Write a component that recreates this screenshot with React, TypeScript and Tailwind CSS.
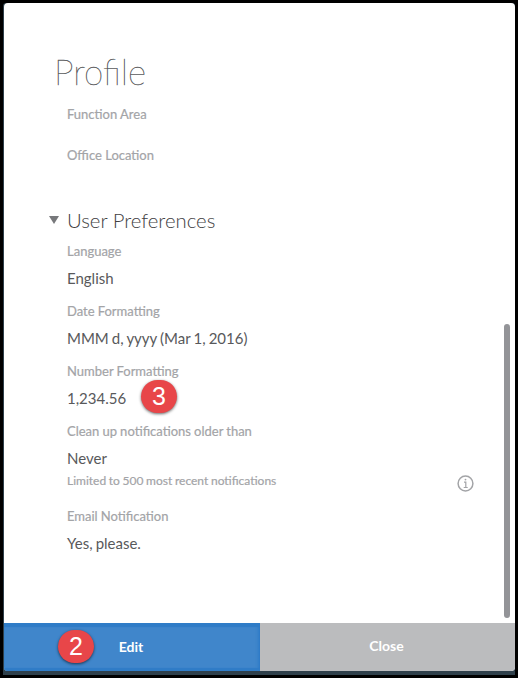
import React from "react";
import { clsx } from "clsx";

const preferences = [
  { label: "Language", value: "English" },
  { label: "Date Formatting", value: "MMM d, yyyy (Mar 1, 2016)" },
  { label: "Number Formatting", value: "1,234.56", step: "3" },
  {
    label: "Clean up notifications older than",
    value: "Never",
    hint: "Limited to 500 most recent notifications",
  },
  { label: "Email Notification", value: "Yes, please." },
];

function StepBadge({ step, className }: { step: string; className?: string }) {
  return (
    <span
      className={clsx(
        "absolute flex h-[33px] w-9 items-center justify-center rounded-full bg-[#e84649] font-['Liberation_Sans',sans-serif] text-[25px] leading-none font-normal text-white shadow-[0_1px_3px_rgba(0,0,0,0.6)]",
        className
      )}
    >
      {step}
    </span>
  );
}

function InfoIcon() {
  return (
    <svg className="mt-[4px] h-[17px] w-[17px]" viewBox="0 0 17 17" fill="none" stroke="#a3a4a7">
      <circle cx="8.5" cy="8.5" r="7.4" strokeWidth="1.5" />
      <path d="M7 7.2h1.8v5.3M6.7 12.5h4" strokeWidth="1.2" />
      <circle cx="8.5" cy="4.6" r="0.9" fill="#a3a4a7" stroke="none" />
    </svg>
  );
}

export default function App() {
  return (
    <div className="h-[678px] w-[518px] overflow-hidden bg-black pt-[3px] pl-[3px] font-['Lato',sans-serif]">
      <div className="h-[672px] w-[512px] rounded-t-[3px] bg-[#2f404b] pl-px">
        <div className="relative flex h-[668px] flex-col overflow-hidden rounded-[4px] bg-white">
          <div className="flex-1 pl-[63px]">
            <h1 className="-ml-[13px] pt-[47px] text-[35px] leading-[42px] font-extralight text-[#58595b] [-webkit-text-stroke:0.35px_#58595b]">
              Profile
            </h1>
            <div className="pt-[12px] text-[13px] leading-5 text-[#a3a4a7] [-webkit-text-stroke:0.2px_#a3a4a7]">
              <p>Function Area</p>
              <p className="mt-[21px]">Office Location</p>
            </div>

            <div className="mt-[43px] -ml-[18px] flex h-6 items-center">
              <svg className="h-2 w-[10px]" viewBox="0 0 10 8">
                <path d="M0 0h10L5 8z" fill="#77787b" />
              </svg>
              <h2 className="ml-2 text-[20.3px] leading-6 font-light text-[#414042]">User Preferences</h2>
            </div>

            <div className="pt-[9px]">
              {preferences.map((item) => (
                <div key={item.label} className="pb-[13px]">
                  <p className="text-[13px] leading-5 text-[#a3a4a7] [-webkit-text-stroke:0.2px_#a3a4a7] [word-spacing:-0.2px]">
                    {item.label}
                  </p>
                  <div className="relative mt-[7px] text-[15px] leading-5 text-[#58595b] [word-spacing:-0.75px]">
                    {item.value}
                    {item.step && <StepBadge step={item.step} className="-top-[8px] left-[74px]" />}
                  </div>
                  {item.hint && (
                    <div className="flex h-[25px] justify-between pt-[3px] pr-[41px] text-[12px] leading-5 text-[#a3a4a7] [-webkit-text-stroke:0.2px_#a3a4a7] [word-spacing:-0.4px]">
                      <span>{item.hint}</span>
                      <InfoIcon />
                    </div>
                  )}
                </div>
              ))}
            </div>
          </div>

          {/* Scrollbar thumb */}
          <div className="absolute top-[321px] right-[5px] h-[294px] w-[6px] rounded-full bg-[#939498]" />

          <div className="flex h-12 shrink-0 text-[14px] font-bold text-white">
            <button className="relative w-64 bg-[#4086cb] pr-0.5 pb-px shadow-[inset_0_4px_1px_#2f7cc7,inset_0_-3px_1px_#2f7cc7,inset_-2px_0_3px_#2f7cc7]">
              <StepBadge step="2" className="top-[7px] left-[54px]" />
              Edit
            </button>
            <button className="flex-1 bg-[#bbbcbe] pr-0.5 pb-[3px]">Close</button>
          </div>
        </div>
      </div>
    </div>
  );
}
